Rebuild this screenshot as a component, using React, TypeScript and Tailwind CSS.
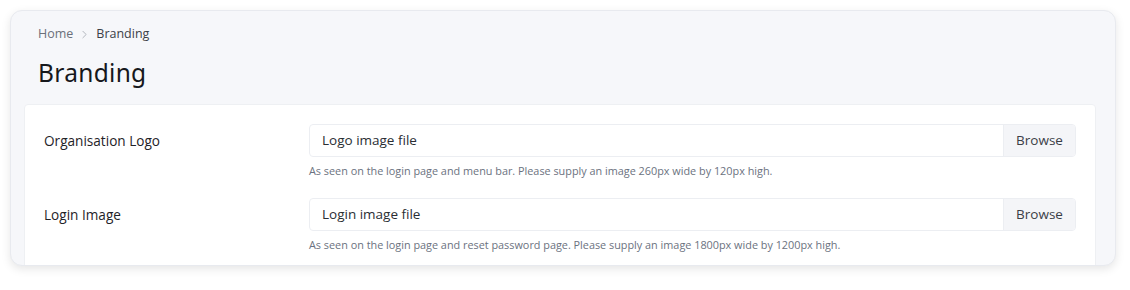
import { ChevronRight } from 'lucide-react';

const fields = [
  {
    label: 'Organisation Logo',
    placeholder: 'Logo image file',
    help: 'As seen on the login page and menu bar. Please supply an image 260px wide by 120px high.',
  },
  {
    label: 'Login Image',
    placeholder: 'Login image file',
    help: 'As seen on the login page and reset password page. Please supply an image 1800px wide by 1200px high.',
  },
];

function FileField({ label, placeholder, help }: { label: string; placeholder: string; help: string }) {
  return (
    <div className="flex">
      <div className="w-[265px] shrink-0 h-[34px] flex items-center text-[13.6px] text-[#1f2328]">{label}</div>
      <div className="flex-1">
        <div className="flex h-[33px] rounded-[4px] border border-[#eceef2] overflow-hidden">
          <div className="flex-1 flex items-center px-[12px] text-[13.5px] text-[#2a2e33]">{placeholder}</div>
          <div className="w-[72px] flex items-center justify-center bg-[#f4f5f8] border-l border-[#eceef2] text-[13.5px] text-[#3b4047]">
            Browse
          </div>
        </div>
        <p className="mt-[6px] text-[10.85px] text-[#6b7280] leading-[16px]">{help}</p>
      </div>
    </div>
  );
}

export default function App() {
  return (
    <div className="w-[1130px] h-[290px] bg-white pt-[10px] px-[10px]" style={{ fontFamily: '"Open Sans", sans-serif' }}>
      <div className="w-[1106px] h-[256px] rounded-[12px] bg-[#f6f7fa] border border-[#e8eaef] shadow-[0_3px_10px_rgba(0,0,0,0.10)] overflow-hidden">
        <div className="px-[27px] pt-[15px]">
          <nav className="flex items-center gap-[5px] text-[12.5px] h-[16px]">
            <span className="text-[#6b7079]">Home</span>
            <ChevronRight className="w-[13px] h-[13px] text-[#a3a8b0]" strokeWidth={1.5} />
            <span className="text-[#3b4047]">Branding</span>
          </nav>
          <h1 className="mt-[16px] text-[24.5px] leading-[30px] text-[#16181c] tracking-[0.3px]" style={{ fontFamily: '"Noto Sans", sans-serif' }}>
            Branding
          </h1>
        </div>
        <div className="mt-[16px] ml-[13px] mr-[19px] bg-white rounded-t-[4px] border border-[#eef0f3] px-[19px] pt-[19px] pb-[30px] flex flex-col gap-[19px]">
          {fields.map((f) => (
            <FileField key={f.label} {...f} />
          ))}
        </div>
      </div>
    </div>
  );
}
